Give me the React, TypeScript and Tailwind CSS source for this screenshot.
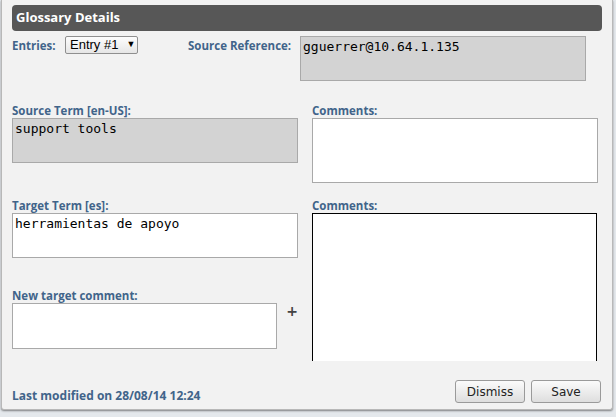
import React from 'react'

const label = "block text-[11.5px] font-bold leading-[15px] text-[#41648a] [font-family:'Open_Sans',sans-serif]"
const mono = "[font-family:'DejaVu_Sans_Mono',monospace] text-[13px] leading-[16px] text-black"

function Field({ text, gray, h, w = 'w-full', focus }: { text?: string; gray?: boolean; h: string; w?: string; focus?: boolean }) {
  return (
    <div
      className={`${w} ${h} border ${focus ? 'border-black border-b-0' : 'border-[#a9a9a9]'} ${gray ? 'bg-[#d3d3d3]' : 'bg-white'} px-[2px] py-[2px] ${mono}`}
    >
      {text}
    </div>
  )
}

function Button({ children }: { children: React.ReactNode }) {
  return (
    <button className="w-[70px] h-[23px] rounded-[3px] border border-[#9a9a9a] bg-gradient-to-b from-[#fbfbfb] to-[#dedede] text-[12px] text-[#222] [font-family:'DejaVu_Sans',sans-serif]">
      {children}
    </button>
  )
}

export default function App() {
  return (
    <div className="w-[616px] h-[417px] bg-[#e4e8ec] overflow-hidden">
      <div className="ml-px w-[612px] h-[410px] bg-[#f2f2f2] border border-t-0 border-[#b8b8b8] rounded-b-[3px] shadow-[0_1px_2px_rgba(0,0,0,0.45)] flex flex-col">
        <div className="mt-[5px] ml-[10px] w-[590px] h-[26px] rounded-[4px] bg-[#575757] flex items-center pl-[4px]">
          <span className="text-white font-bold text-[13px] [font-family:'Open_Sans',sans-serif]">Glossary Details</span>
        </div>

        <div className="h-[330px] overflow-hidden pl-[10px] pt-[5px]">
          <div className="flex items-start h-[45px]">
            <span className={`${label} mt-[2px] w-[53px]`}>Entries:</span>
            <div className="w-[73px] h-[18px] border border-[#8f8f8f] rounded-[2px] bg-gradient-to-b from-[#fdfdfd] to-[#e6e6e6] flex items-center pl-[4px] gap-[8px] text-[13px] text-black [font-family:'Liberation_Sans',Arial,sans-serif]">
              <span>Entry #1</span>
              <span className="text-[9px]">▼</span>
            </div>
            <span className={`${label} mt-[2px] ml-[50px] w-[112px]`}>Source Reference:</span>
            <Field text="gguerrer@10.64.1.135" gray h="h-[45px]" w="w-[286px]" />
          </div>

          <div className="grid grid-cols-[286px_286px] gap-x-[14px] gap-y-[15px] mt-[22px]">
            <div>
              <span className={label}>Source Term [en-US]:</span>
              <Field text="support tools" gray h="h-[45px]" />
            </div>
            <div>
              <span className={label}>Comments:</span>
              <Field h="h-[65px]" />
            </div>
            <div>
              <span className={label}>Target Term [es]:</span>
              <Field text="herramientas de apoyo" h="h-[45px]" />
              <span className={`${label} mt-[30px]`}>New target comment:</span>
              <div className="flex items-start">
                <Field h="h-[46px]" w="w-[266px]" />
                <span className="ml-[9px] mt-[1px] text-[14px] font-bold leading-[14px] text-[#444] [font-family:'DejaVu_Sans',sans-serif]">+</span>
              </div>
            </div>
            <div>
              <span className={label}>Comments:</span>
              <Field h="h-[160px]" w="w-[285px]" focus />
            </div>
          </div>
        </div>

        <div className="flex items-start justify-between pl-[10px] pr-[11px] mt-[19px]">
          <span className={`${label} text-[12px] mt-[8px]`}>Last modified on 28/08/14 12:24</span>
          <div className="flex gap-[6px]">
            <Button>Dismiss</Button>
            <Button>Save</Button>
          </div>
        </div>
      </div>
    </div>
  )
}
